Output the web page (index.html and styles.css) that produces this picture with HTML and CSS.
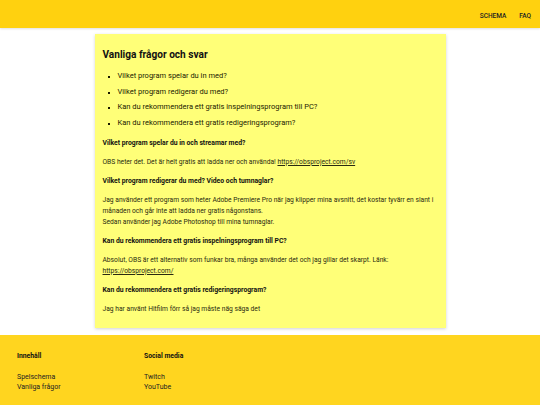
FILE: index.html
```html
<!DOCTYPE html>
<html lang="sv">
<head>
<meta charset="utf-8">
<title>Vanliga frågor och svar</title>
<link rel="stylesheet" href="styles.css">
</head>
<body>
<header class="topbar">
  <nav class="nav">
    <a href="#" class="nav-link">SCHEMA</a>
    <a href="#" class="nav-link">FAQ</a>
  </nav>
</header>
<main class="main">
  <section class="card">
    <h1 class="title">Vanliga frågor och svar</h1>
    <ul class="toc">
      <li>Vilket program spelar du in med?</li>
      <li>Vilket program redigerar du med?</li>
      <li>Kan du rekommendera ett gratis inspelningsprogram till PC?</li>
      <li>Kan du rekommendera ett gratis redigeringsprogram?</li>
    </ul>
    <h2 class="q">Vilket program spelar du in och streamar med?</h2>
    <p class="a">OBS heter det. Det är helt gratis att ladda ner och använda! <a href="#">https://obsproject.com/sv</a></p>
    <h2 class="q">Vilket program redigerar du med? Video och tumnaglar?</h2>
    <p class="a">Jag använder ett program som heter Adobe Premiere Pro när jag klipper mina avsnitt, det kostar tyvärr en slant i månaden och går inte att ladda ner gratis någonstans.<br>Sedan använder jag Adobe Photoshop till mina tumnaglar.</p>
    <h2 class="q">Kan du rekommendera ett gratis inspelningsprogram till PC?</h2>
    <p class="a">Absolut, OBS är ett alternativ som funkar bra, många använder det och jag gillar det skarpt. Länk: <a href="#">https://obsproject.com/</a></p>
    <h2 class="q">Kan du rekommendera ett gratis redigeringsprogram?</h2>
    <p class="a">Jag har använt Hitfilm förr så jag måste näg säga det</p>
  </section>
</main>
<footer class="footer">
  <div class="fcol">
    <h3 class="fhead">Innehåll</h3>
    <a href="#" class="flink">Spelschema</a>
    <a href="#" class="flink">Vanliga frågor</a>
  </div>
  <div class="fcol">
    <h3 class="fhead">Social media</h3>
    <a href="#" class="flink">Twitch</a>
    <a href="#" class="flink">YouTube</a>
  </div>
</footer>
</body>
</html>
```
FILE: styles.css
```css
* { box-sizing: border-box; }
html, body { margin: 0; padding: 0; }
body {
  font-family: Roboto, "Liberation Sans", sans-serif;
  color: #1a1a00;
  background: #ffffff;
}
a { color: inherit; }

.topbar {
  height: 28px;
  background: #ffd10f;
  display: flex;
  justify-content: flex-end;
  align-items: center;
  padding-right: 9px;
  box-shadow: 0 1px 2px rgba(0,0,0,0.12);
}
.nav { display: flex; gap: 13px; padding-top: 3px; }
.nav-link {
  text-decoration: none;
  font-size: 6.5px;
  font-weight: 500;
  color: #222;
}

.main { padding-top: 6px; }
.card {
  width: 65%;
  margin: 0 auto;
  background: #ffff78;
  padding: 14px 8px 13px;
  box-shadow: 0 1px 3px rgba(0,0,0,0.18);
}
.title {
  margin: 0;
  font-size: 10.1px;
  line-height: 14px;
  font-weight: 700;
  color: #111;
}
.toc {
  margin: 6px 0 7px;
  padding-left: 15px;
  font-size: 7.5px;
  line-height: 15.7px;
  list-style: square;
}
.toc li::marker { font-size: 5px; }
.q {
  margin: 0;
  font-size: 6.8px;
  line-height: 11px;
  font-weight: 700;
  color: #111;
}
.a {
  margin: 8px 0;
  font-size: 6.7px;
  line-height: 11px;
  color: #2a2a10;
}
.a:last-child { margin-bottom: 0; }

.footer {
  margin-top: 7px;
  background: #ffd51f;
  height: 71px;
  display: grid;
  grid-template-columns: 127px 127px;
  padding: 16px 17px 0;
}
.fcol { display: flex; flex-direction: column; }
.fhead {
  margin: 0 0 11px;
  font-size: 6.8px;
  line-height: 10px;
  font-weight: 700;
  color: #111;
}
.flink {
  text-decoration: none;
  font-size: 7px;
  line-height: 10px;
  color: #222;
}
```
